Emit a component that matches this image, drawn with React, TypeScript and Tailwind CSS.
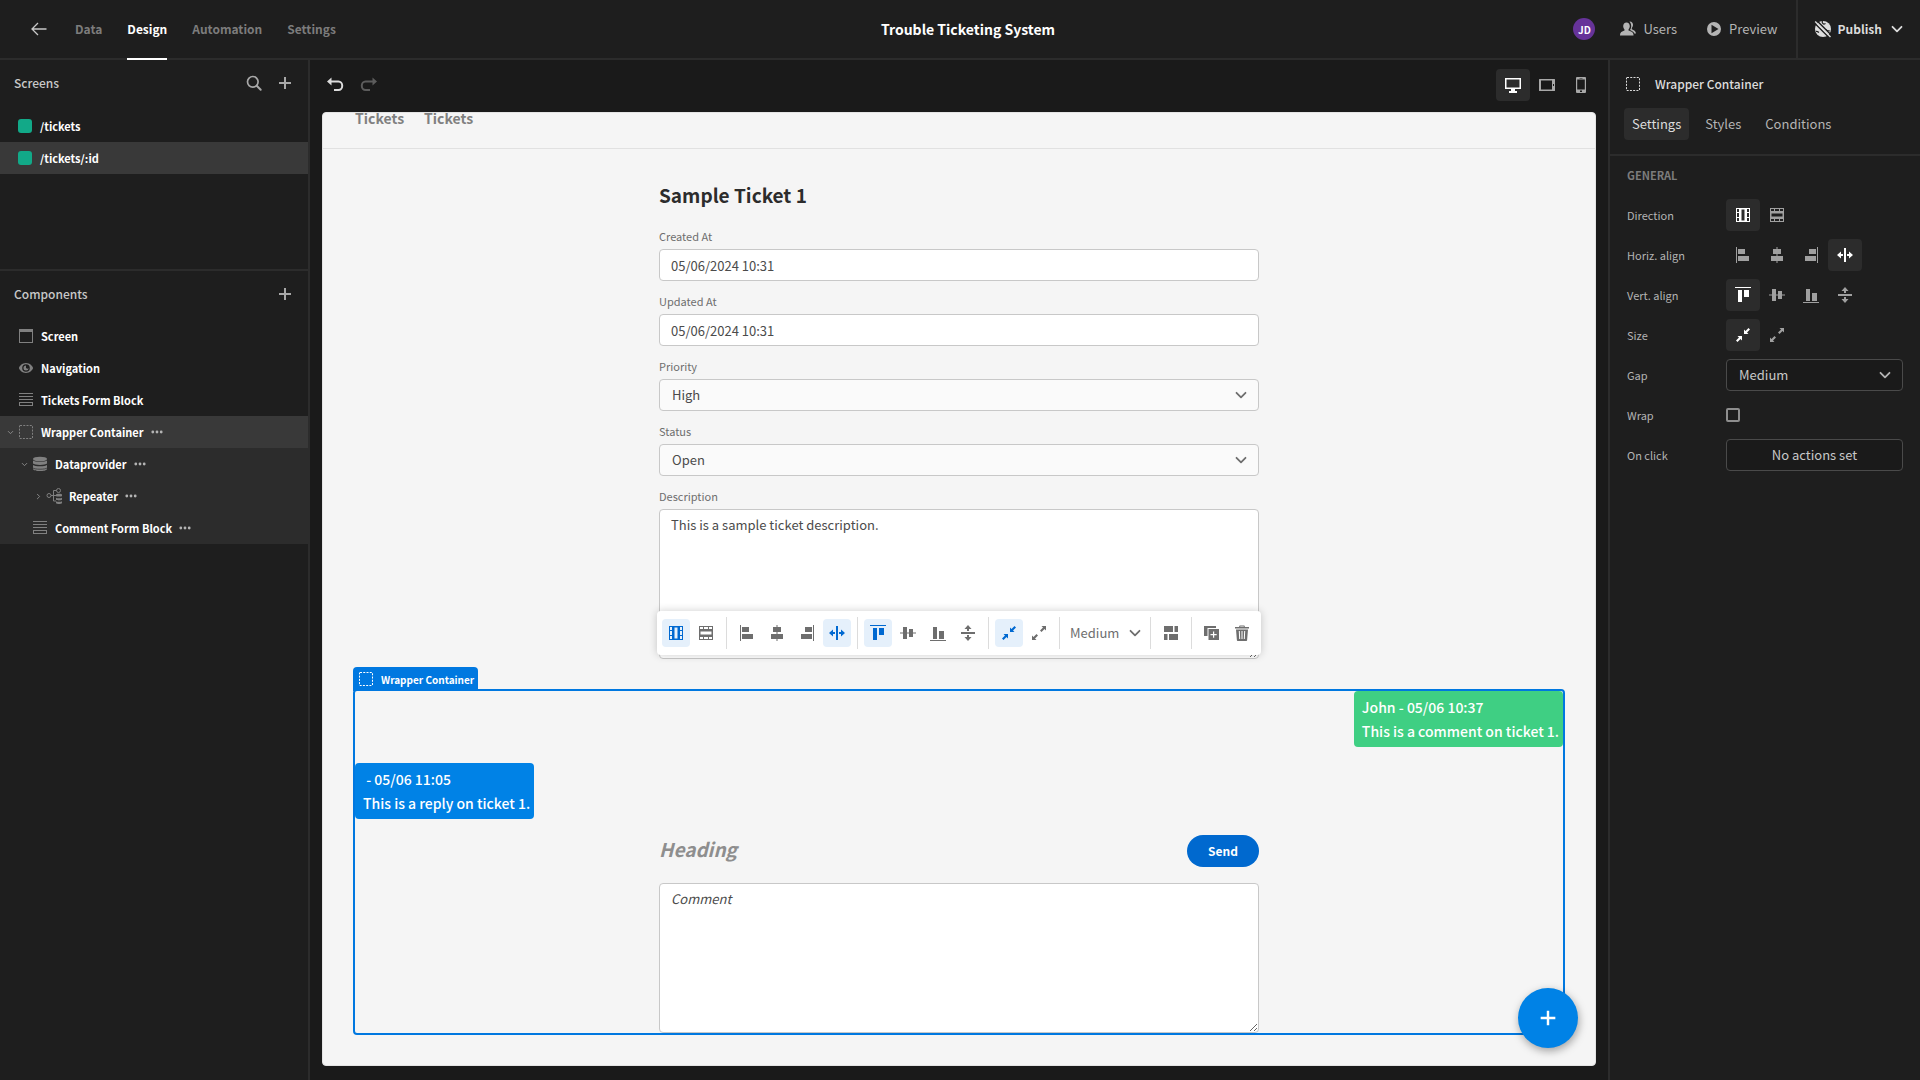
import React from 'react';
import clsx from 'clsx';

interface IconProps {
  className?: string;
}

const Svg: React.FC<IconProps & { children: React.ReactNode }> = ({ className, children }) => (
  <svg viewBox="0 0 18 18" fill="currentColor" aria-hidden="true" className={clsx('shrink-0', className ?? 'size-[18px]')}>
    {children}
  </svg>
);

const ColumnIcon = () => (
  <Svg>
    <path d="M2 2h14v14H2zM3 3v3h2V3zm0 4v4h2V7zm0 5v3h2v-3zM13 3v3h2V3zm0 4v4h2V7zm0 5v3h2v-3zM7.5 3.5v11h3v-11z" fillRule="evenodd" />
  </Svg>
);

const RowIcon = () => (
  <Svg>
    <path d="M2 2h14v14H2zM3 3v2h3V3zm4 0v2h4V3zm5 0v2h3V3zM3 13v2h3v-2zm4 0v2h4v-2zm5 0v2h3v-2zM3.500 7.500v3h11v-3z" fillRule="evenodd" />
  </Svg>
);

const AlignLeftIcon = () => (
  <Svg>
    <path d="M2 1h1v16H2zM4 3h7v5H4zM4 10h11v5H4z" />
  </Svg>
);

const AlignCenterIcon = () => (
  <Svg>
    <path d="M8.500 1h1v16h-1zM5 3h8v5H5zM3 10h12v5H3z" />
  </Svg>
);

const AlignRightIcon = () => (
  <Svg>
    <path d="M15 1h1v16h-1zM7 3h7v5H7zM3 10h11v5H3z" />
  </Svg>
);

const SpreadHIcon = () => (
  <Svg>
    <path d="M8 2h2v14H8zM1 9l4-3.500V8h2v2H5v2.500zM17 9l-4-3.500V8h-2v2h2v2.500z" />
  </Svg>
);

const AlignTopIcon = () => (
  <Svg>
    <path d="M1 1h16v1H1zM4 4h4v12H4zM10 4h5v7h-5z" />
  </Svg>
);

const AlignMiddleIcon = () => (
  <Svg>
    <path d="M1 8.500h16v1H1zM4 3h4v12H4zM10 5h4v8h-4z" />
  </Svg>
);

const AlignBottomIcon = () => (
  <Svg>
    <path d="M1 16h16v1H1zM4 3h4v12H4zM10 7h5v8h-5z" />
  </Svg>
);

const SpreadVIcon = () => (
  <Svg>
    <path d="M2 8h14v2H2zM9 1l3.500 4H10v2H8V5H5.500zM9 17l3.500-4H10v-2H8v2H5.500z" />
  </Svg>
);

const ShrinkIcon = () => (
  <Svg>
    <path d="M10 3.500V8h4.500l-1.500-1.500L16 3.500 14.500 2l-3 3zM8 14.500V10H3.500L5 11.500 2 14.500 3.500 16l3-3z" />
  </Svg>
);

const GrowIcon = () => (
  <Svg>
    <path d="M16 6.500V2h-4.500L13 3.500l-3 3L11.500 8l3-3zM2 11.500V16h4.500L5 14.500l3-3L6.500 10l-3 3z" />
  </Svg>
);

const ChevronIcon: React.FC<IconProps> = ({ className }) => (
  <Svg className={className}>
    <path d="M4.500 6.800L9 11.300l4.500-4.500" fill="none" stroke="currentColor" strokeWidth="1.800" strokeLinecap="round" strokeLinejoin="round" />
  </Svg>
);

const PlusIcon: React.FC<IconProps> = ({ className }) => (
  <Svg className={className}>
    <path d="M8 3h2v5h5v2h-5v5H8v-5H3V8h5z" />
  </Svg>
);

const ContainerIcon: React.FC<IconProps> = ({ className }) => (
  <Svg className={className}>
    <rect x="2.500" y="2.500" width="13" height="13" rx="0.500" fill="none" stroke="currentColor" strokeDasharray="2 1.250" />
  </Svg>
);

const BackIcon = () => (
  <Svg>
    <path d="M16.500 9H2M8 3L2 9l6 6" fill="none" stroke="currentColor" strokeWidth="1.300" />
  </Svg>
);

const SearchIcon = () => (
  <Svg>
    <circle cx="7.800" cy="7.800" r="5.300" fill="none" stroke="currentColor" strokeWidth="1.700" />
    <path d="M11.700 11.700l4 4" stroke="currentColor" strokeWidth="2" strokeLinecap="round" />
  </Svg>
);

const UndoIcon: React.FC<IconProps> = ({ className }) => (
  <Svg className={className}>
    <path d="M1 5.500L5.500 1.500V9.500z" />
    <path d="M4 5.500h8.500a3.500 4 0 0 1 0 8.500H8" fill="none" stroke="currentColor" strokeWidth="2" />
  </Svg>
);

const DesktopIcon = () => (
  <Svg>
    <path d="M1 2h16v11h-6v2h2v2H5v-2h2v-2H1zM2.500 3.500v8h13v-8z" fillRule="evenodd" />
  </Svg>
);

const TabletIcon = () => (
  <Svg>
    <path d="M1.500 3h15a.5.5 0 0 1 .5.500v11a.5.5 0 0 1-.5.500h-15a.5.5 0 0 1-.5-.500v-11a.5.5 0 0 1 .5-.500zM3 4.500v9h11v-9zM15 8v2h1V8z" fillRule="evenodd" />
  </Svg>
);

const PhoneIcon = () => (
  <Svg>
    <path d="M5 1h8a1 1 0 0 1 1 1v14a1 1 0 0 1-1 1H5a1 1 0 0 1-1-1V2a1 1 0 0 1 1-1zM5.200 3.500v10h7.600v-10zM8 14.500v1.500h2v-1.500zM7.500 1.900v.700h3v-.700z" fillRule="evenodd" />
  </Svg>
);

const UsersIcon = () => (
  <Svg>
    <path d="M7.500 2.500c2 0 3.300 1.500 3.300 3.600 0 1.400-.600 2.500-1.300 3.300v1.200c2.600.8 5 1.700 5 4.400v.5H1V15c0-2.700 2-3.600 4.500-4.400V9.400C4.800 8.600 4.200 7.500 4.200 6.100c0-2.100 1.300-3.600 3.300-3.600z" />
    <path d="M10.500 1.500c2.100-.200 3.500 1.400 3.500 3.300 0 1.400-.500 2.400-1.200 3.200v1.300c2.200.8 4 2 4.200 4.200h-1.700c-.600-1.900-2.300-2.800-4.300-3.600.800-1 1.200-2.300 1.200-3.700 0-2-.700-3.500-1.700-4.700z" />
  </Svg>
);

const PlayIcon = () => (
  <Svg>
    <path d="M9 2a7 7 0 1 1 0 14A7 7 0 0 1 9 2zM6.500 4.800v8.400L13.500 9z" fillRule="evenodd" />
  </Svg>
);

const GlobeOffIcon = () => (
  <Svg>
    <circle cx="9" cy="9" r="8" />
    <path d="M8.500 1c-.800 1.600.200 2.600 1.500 3.200l1.500-.700M2 11.500c1.500-.5 2 .5 3 1M12 9.500c1 1.500 2.500 1 4 1.500" fill="none" stroke="#1e1e1e" strokeWidth="1.200" />
    <path d="M0 2.500L15.500 18M2.700.500L18 15.700" stroke="#1e1e1e" strokeWidth="1.500" />
    <path d="M1.200 1.500L16.500 17" stroke="currentColor" strokeWidth="1.400" />
  </Svg>
);

const ScreenIcon = () => (
  <Svg>
    <path d="M2 2h14v14H2zM3 5v10h12V5z" fillRule="evenodd" />
  </Svg>
);

const EyeIcon = () => (
  <Svg>
    <path d="M9 4c3.600 0 7 3.200 7 5s-3.400 5-7 5-7-3.200-7-5 3.400-5 7-5zm0 1.200a3.800 3.800 0 1 0 0 7.600 3.800 3.800 0 0 0 0-7.600z" fillRule="evenodd" />
    <path d="M9 6.500a2.500 2.500 0 1 0 2.500 2.500A1.400 1.400 0 0 1 9 7.800z" />
  </Svg>
);

const FormIcon = () => (
  <Svg>
    <path d="M2 2h14v1H2zM2 5h14v1H2zM2 8h14v1H2zM2 11h14v4H2zM3 12v2h12v-2z" fillRule="evenodd" />
  </Svg>
);

const DataIcon = () => (
  <Svg>
    <ellipse cx="9" cy="4" rx="7" ry="2.300" />
    <path d="M2 5.500c1.500 1.800 12.500 1.800 14 0v3c-1.500 1.900-12.500 1.900-14 0zM2 9.900c1.500 1.800 12.500 1.800 14 0v4c-1 2.900-13 2.900-14 0z" />
    <path d="M2 13c1.500 1.600 12.500 1.600 14 0" fill="none" stroke="#2c2c2c" strokeWidth=".7" />
  </Svg>
);

const RepeaterIcon = () => (
  <Svg>
    <g fill="none" stroke="currentColor">
      <circle cx="4" cy="8.500" r="2" />
      <circle cx="13.500" cy="3.500" r="2" />
      <path d="M6 8.500h2.500M11.500 3.500h-3v10.500H11M8.500 8.500H11" />
    </g>
    <path d="M11 7.500c0-1 6-1 6 0V9c0 .8-6 .8-6 0zM11 10.800c1 .7 5 .7 6 0v2c-1 .8-5 .8-6 0zM11 14.300c1 .7 5 .7 6 0v2c-1 1-5 1-6 0z" />
  </Svg>
);

const DotsIcon = () => (
  <Svg className="size-[14px]">
    <circle cx="3.600" cy="9" r="1.800" />
    <circle cx="9" cy="9" r="1.800" />
    <circle cx="14.400" cy="9" r="1.800" />
  </Svg>
);

const LayoutIcon = () => (
  <Svg>
    <path d="M2 2h9v6H2zM12.500 2H16v6h-3.500zM2 10h3.500v6H2zM7 10h9v6H7z" />
  </Svg>
);

const DuplicateIcon = () => (
  <Svg>
    <path d="M1 2h12v2H4.500v8H1z" />
    <path d="M5.500 5H16v11H5.500zM10 7.500V10H7.500v1.200H10v2.500h1.200v-2.500h2.500V10h-2.500V7.500z" fillRule="evenodd" />
  </Svg>
);

const TrashIcon = () => (
  <Svg>
    <path d="M7 1.500h4a.8.8 0 0 1 .8.800V3H16v1.500H2V3h4.200v-.700a.8.8 0 0 1 .8-.8zM7.200 2.500V3h3.600v-.500z" fillRule="evenodd" />
    <path d="M3 5.500h12l-.900 10.700a.8.8 0 0 1-.8.800H4.700a.8.8 0 0 1-.8-.800zM5.800 7l.4 8h1L6.800 7zm2.700 0v8h1V7zm2.700 0l-.4 8h1l.4-8z" fillRule="evenodd" />
  </Svg>
);

const APP_TABS = ['Data', 'Design', 'Automation', 'Settings'];

const TREE = [
  { name: 'Screen', icon: <ScreenIcon />, pad: 'pl-1' },
  { name: 'Navigation', icon: <EyeIcon />, pad: 'pl-1' },
  { name: 'Tickets Form Block', icon: <FormIcon />, pad: 'pl-1' },
  { name: 'Wrapper Container', icon: <ContainerIcon />, pad: 'pl-1', arrow: 'open', bg: 'bg-[#393939]', menu: true },
  { name: 'Dataprovider', icon: <DataIcon />, pad: 'pl-[18px]', arrow: 'open', bg: 'bg-[#2c2c2c]', menu: true },
  { name: 'Repeater', icon: <RepeaterIcon />, pad: 'pl-8', arrow: 'closed', bg: 'bg-[#2c2c2c]', menu: true },
  { name: 'Comment Form Block', icon: <FormIcon />, pad: 'pl-[18px]', bg: 'bg-[#2c2c2c]', menu: true },
];

const DIRECTION = [
  { label: 'Column', icon: <ColumnIcon />, on: true },
  { label: 'Row', icon: <RowIcon /> },
];
const H_ALIGN = [
  { label: 'Left', icon: <AlignLeftIcon /> },
  { label: 'Center', icon: <AlignCenterIcon /> },
  { label: 'Right', icon: <AlignRightIcon /> },
  { label: 'Stretch', icon: <SpreadHIcon />, on: true },
];
const V_ALIGN = [
  { label: 'Top', icon: <AlignTopIcon />, on: true },
  { label: 'Middle', icon: <AlignMiddleIcon /> },
  { label: 'Bottom', icon: <AlignBottomIcon /> },
  { label: 'Stretch vertically', icon: <SpreadVIcon /> },
];
const SIZE = [
  { label: 'Shrink', icon: <ShrinkIcon />, on: true },
  { label: 'Grow', icon: <GrowIcon /> },
];

type Option = { label: string; icon: React.ReactNode; on?: boolean };

const Header = () => (
  <header className="grid h-[60px] shrink-0 grid-cols-[1fr_auto_1fr] border-b-2 border-[#2c2c2c] bg-[#1e1e1e] pl-4">
    <nav className="flex items-stretch">
      <button aria-label="Back" className="mr-[27px] ml-[14px] text-[#c8c8c8]">
        <BackIcon />
      </button>
      <div className="flex gap-[25px]">
        {APP_TABS.map(tab => (
          <a
            key={tab}
            href="#"
            className={clsx(
              '-mb-0.5 flex items-center border-b-2 text-[12px] font-bold',
              tab === 'Design' ? 'border-white text-white' : 'border-transparent text-[#7c7c7c]'
            )}
          >
            {tab}
          </a>
        ))}
      </div>
    </nav>
    <h1 className="self-center text-[14px] font-bold text-white">Trouble Ticketing System</h1>
    <div className="flex items-stretch justify-end text-[13px] text-[#b4b4b4]">
      <span className="mr-6 flex size-[22px] items-center justify-center self-center rounded-full bg-[#663399] text-[10px] font-bold text-white">
        JD
      </span>
      <button className="mr-7 flex items-center gap-1.5">
        <UsersIcon />
        Users
      </button>
      <button className="mr-[18px] flex items-center gap-1.5">
        <PlayIcon />
        Preview
      </button>
      <button className="flex items-center gap-1.5 border-l-2 border-[#2c2c2c] pr-3.5 pl-4 text-[12px] font-bold text-[#dcdcdc]">
        <GlobeOffIcon />
        Publish
        <ChevronIcon />
      </button>
    </div>
  </header>
);

const LeftPanel = () => (
  <aside className="flex w-[310px] shrink-0 flex-col border-r-2 border-[#2c2c2c] bg-[#1e1e1e]">
    <section className="h-[211px] border-b-2 border-[#2c2c2c]">
      <div className="flex h-[50px] items-center gap-[13px] px-[14px] pb-1 text-[#a8a8a8]">
        <h2 className="mr-auto text-[12px] font-medium text-[#c8c8c8]">Screens</h2>
        <button aria-label="Search screens">
          <SearchIcon />
        </button>
        <button aria-label="Add screen">
          <PlusIcon />
        </button>
      </div>
      {['/tickets', '/tickets/:id'].map((path, i) => (
        <a
          key={path}
          href="#"
          className={clsx('flex h-8 items-center gap-2 pl-[18px] text-[11px] font-bold text-white', i === 1 && 'bg-[#393939]')}
        >
          <span className="size-[14px] rounded-[3px] bg-[#12a988]" />
          {path}
        </a>
      ))}
    </section>
    <section>
      <div className="flex h-[49px] items-center px-[14px] pb-1 text-[#a8a8a8]">
        <h2 className="mr-auto text-[12px] font-medium text-[#c8c8c8]">Components</h2>
        <button aria-label="Add component">
          <PlusIcon />
        </button>
      </div>
      <ul>
        {TREE.map(node => (
          <li key={node.name} className={clsx('flex h-8 items-center text-[11px] font-bold text-white', node.pad, node.bg)}>
            <span className="w-[13px] pl-0.5 text-[#8e8e8e]">
              {node.arrow && <ChevronIcon className={clsx('size-[9px]', node.arrow === 'closed' && '-rotate-90')} />}
            </span>
            <span className="mr-1.5 text-[#808080]">{node.icon}</span>
            {node.name}
            {node.menu && (
              <button aria-label={`${node.name} options`} className="ml-1.5 text-[#b4b4b4]">
                <DotsIcon />
              </button>
            )}
          </li>
        ))}
      </ul>
    </section>
  </aside>
);

const SettingRow: React.FC<{ label: string; htmlFor?: string; children: React.ReactNode }> = ({ label, htmlFor, children }) => (
  <div className="flex h-8 items-center">
    <label htmlFor={htmlFor} className="w-[99px] shrink-0 text-[11px] text-[#b4b4b4]">
      {label}
    </label>
    {children}
  </div>
);

const OptionGroup: React.FC<{ options: Option[] }> = ({ options }) => (
  <div className="flex">
    {options.map(o => (
      <button
        key={o.label}
        aria-label={o.label}
        className={clsx('flex h-8 w-[34px] items-center justify-center rounded', o.on ? 'bg-[#2c2c2c] text-white' : 'text-[#a0a0a0]')}
      >
        {o.icon}
      </button>
    ))}
  </div>
);

const RightPanel = () => (
  <aside className="w-[312px] shrink-0 border-l-2 border-[#2c2c2c] bg-[#1e1e1e]">
    <div className="flex h-12 items-center gap-[13px] pl-[14px] text-[#dcdcdc]">
      <ContainerIcon />
      <h2 className="text-[12px] font-medium">Wrapper Container</h2>
    </div>
    <div className="flex h-12 items-start gap-2 border-b-2 border-[#2c2c2c] pl-[14px] text-[13px] text-[#b4b4b4]">
      <button className="h-8 rounded bg-[#2c2c2c] px-2 text-[#dcdcdc]">Settings</button>
      <button className="h-8 px-2">Styles</button>
      <button className="h-8 px-2">Conditions</button>
    </div>
    <div className="flex flex-col gap-2 pt-[11px] pr-[17px] pl-[17px]">
      <h3 className="mb-2 text-[11px] leading-4 font-bold text-[#7c7c7c]">GENERAL</h3>
      <SettingRow label="Direction">
        <OptionGroup options={DIRECTION} />
      </SettingRow>
      <SettingRow label="Horiz. align">
        <OptionGroup options={H_ALIGN} />
      </SettingRow>
      <SettingRow label="Vert. align">
        <OptionGroup options={V_ALIGN} />
      </SettingRow>
      <SettingRow label="Size">
        <OptionGroup options={SIZE} />
      </SettingRow>
      <SettingRow label="Gap" htmlFor="gap">
        <div className="relative flex-1 text-[#b4b4b4]">
          <select id="gap" className="h-8 w-full appearance-none rounded border border-[#4a4a4a] bg-[#1a1a1a] pl-3 text-[13px] text-[#c8c8c8]">
            <option>Medium</option>
          </select>
          <ChevronIcon className="pointer-events-none absolute top-[7px] right-[9px] size-[18px]" />
        </div>
      </SettingRow>
      <SettingRow label="Wrap" htmlFor="wrap">
        <input id="wrap" type="checkbox" className="size-[14px] appearance-none rounded-[2px] border-2 border-[#8e8e8e]" />
      </SettingRow>
      <SettingRow label="On click" htmlFor="on-click">
        <button id="on-click" className="h-8 flex-1 rounded border border-[#4a4a4a] bg-[#1a1a1a] text-[13px] text-[#c8c8c8]">
          No actions set
        </button>
      </SettingRow>
    </div>
  </aside>
);

const FIELD = 'block w-full rounded border border-[#c8c8c8] text-[13px]';

const Field: React.FC<{ id: string; label: string; children: React.ReactNode }> = ({ id, label, children }) => (
  <div>
    <label htmlFor={id} className="flex h-[25px] items-center text-[11px] text-[#6e6e6e]">
      {label}
    </label>
    {children}
  </div>
);

const Picker: React.FC<{ id: string; value: string }> = ({ id, value }) => (
  <div className="relative text-[#6e6e6e]">
    <select id={id} className={clsx(FIELD, 'h-8 appearance-none bg-[#fafafa] pl-3 text-[#4b4b4b]')}>
      <option>{value}</option>
    </select>
    <ChevronIcon className="pointer-events-none absolute top-[7px] right-[9px] size-[18px]" />
  </div>
);

const ToolGroup: React.FC<{ options: Option[] }> = ({ options }) => (
  <>
    {options.map(o => (
      <button
        key={o.label}
        aria-label={o.label}
        className={clsx('flex size-7 items-center justify-center rounded-sm', o.on && 'bg-[#e5f0fb] text-[#0069d1]')}
      >
        {o.icon}
      </button>
    ))}
  </>
);

const Divider = () => <span className="mx-1 h-8 w-px bg-[#dcdcdc]" />;

const FloatingToolbar = () => (
  <div className="absolute bottom-full left-1/2 mb-9 flex h-11 -translate-x-1/2 items-center gap-0.5 rounded bg-white px-[5px] text-[#6e6e6e] shadow-[0_0_8px_rgba(0,0,0,0.2)]">
    <ToolGroup options={DIRECTION} />
    <Divider />
    <ToolGroup options={H_ALIGN} />
    <Divider />
    <ToolGroup options={V_ALIGN} />
    <Divider />
    <ToolGroup options={SIZE} />
    <Divider />
    <div className="relative">
      <select aria-label="Gap" className="h-7 w-[78px] appearance-none pl-1 text-[13px]">
        <option>Medium</option>
      </select>
      <ChevronIcon className="pointer-events-none absolute top-[5px] right-0 size-[18px]" />
    </div>
    <Divider />
    <ToolGroup options={[{ label: 'Eject block', icon: <LayoutIcon /> }]} />
    <Divider />
    <ToolGroup options={[{ label: 'Duplicate', icon: <DuplicateIcon /> }, { label: 'Delete', icon: <TrashIcon /> }]} />
  </div>
);

const Preview = () => (
  <div className="relative min-h-0 flex-1 overflow-hidden rounded border border-[#e4e4e4] bg-[#f5f5f5]">
    <nav className="flex h-9 gap-5 border-b border-[#e1e1e1] px-8 text-[14px] leading-[10px] font-bold text-[#808080]">
      <a href="#">Tickets</a>
      <a href="#">Tickets</a>
    </nav>
    <div className="px-[30px] pt-[30px]">
      <form className="mx-auto flex max-w-[600px] flex-col gap-2">
        <h2 className="mb-[5px] text-[19px] leading-8 font-bold text-[#2c2c2c]">Sample Ticket 1</h2>
        <Field id="created" label="Created At">
          <input id="created" defaultValue="05/06/2024 10:31" className={clsx(FIELD, 'h-8 bg-white px-[11px] text-[#4b4b4b]')} />
        </Field>
        <Field id="updated" label="Updated At">
          <input id="updated" defaultValue="05/06/2024 10:31" className={clsx(FIELD, 'h-8 bg-white px-[11px] text-[#4b4b4b]')} />
        </Field>
        <Field id="priority" label="Priority">
          <Picker id="priority" value="High" />
        </Field>
        <Field id="status" label="Status">
          <Picker id="status" value="Open" />
        </Field>
        <Field id="description" label="Description">
          <textarea
            id="description"
            defaultValue="This is a sample ticket description."
            className={clsx(FIELD, 'h-[150px] bg-white px-[11px] py-[5px] leading-5 text-[#4b4b4b]')}
          />
        </Field>
      </form>

      {/* Selected component */}
      <section className="relative mt-[30px] flex flex-col gap-4 rounded-sm border-2 border-[#0078e0]">
        <div className="absolute bottom-full -left-0.5 flex h-6 items-center gap-1.5 rounded-t bg-[#0078e0] px-1 text-[10px] font-bold text-white">
          <ContainerIcon />
          Wrapper Container
        </div>
        <FloatingToolbar />
        <p className="self-end rounded bg-[#3fcf83] py-1 pr-1 pl-2 text-[14px] leading-6 font-medium text-white">
          John - 05/06 10:37
          <br />
          This is a comment on ticket 1.
        </p>
        <p className="self-start rounded bg-[#0082e6] py-1 pr-1 pl-2 text-[14px] leading-6 font-medium text-white">
          &nbsp;- 05/06 11:05
          <br />
          This is a reply on ticket 1.
        </p>
        <form className="mx-auto flex w-full max-w-[600px] flex-col gap-4">
          <div className="flex items-start justify-between">
            <h2 className="text-[19px] leading-7 font-bold text-[#8e8e8e] italic">Heading</h2>
            <button type="button" className="h-8 w-[72px] rounded-full bg-[#0069cf] text-[12px] font-bold text-white">
              Send
            </button>
          </div>
          <textarea
            aria-label="Comment"
            placeholder="Comment"
            className={clsx(FIELD, 'h-[150px] bg-white px-[11px] py-[5px] leading-5 placeholder:text-[#4b4b4b] placeholder:italic')}
          />
        </form>
      </section>
    </div>
    <button
      aria-label="Add"
      className="absolute right-[17px] bottom-[17px] flex size-[60px] items-center justify-center rounded-full bg-[#0082e6] text-white shadow-[1px_3px_8px_rgba(0,0,0,0.35)]"
    >
      <PlusIcon className="size-[22px]" />
    </button>
  </div>
);

const Canvas = () => (
  <main className="flex min-w-0 flex-1 flex-col px-3 pb-[14px]">
    <div className="-mr-0.5 flex h-[52px] shrink-0 items-center pb-0.5 text-[#a8a8a8]">
      <button aria-label="Undo" className="mr-4 ml-1 text-[#dcdcdc]">
        <UndoIcon />
      </button>
      <button aria-label="Redo" className="mr-auto text-[#5c5c5c]">
        <UndoIcon className="size-[18px] -scale-x-100" />
      </button>
      <button aria-label="Desktop" className="flex h-8 w-[34px] items-center justify-center rounded bg-[#2c2c2c] text-white">
        <DesktopIcon />
      </button>
      <button aria-label="Tablet" className="flex h-8 w-[34px] items-center justify-center">
        <TabletIcon />
      </button>
      <button aria-label="Mobile" className="flex h-8 w-[34px] items-center justify-center">
        <PhoneIcon />
      </button>
    </div>
    <Preview />
  </main>
);

export default function App() {
  return (
    <div className="flex h-screen flex-col bg-[#1a1a1a] font-['Noto_Sans_CJK_SC',sans-serif]">
      <Header />
      <div className="flex min-h-0 flex-1">
        <LeftPanel />
        <Canvas />
        <RightPanel />
      </div>
    </div>
  );
}
